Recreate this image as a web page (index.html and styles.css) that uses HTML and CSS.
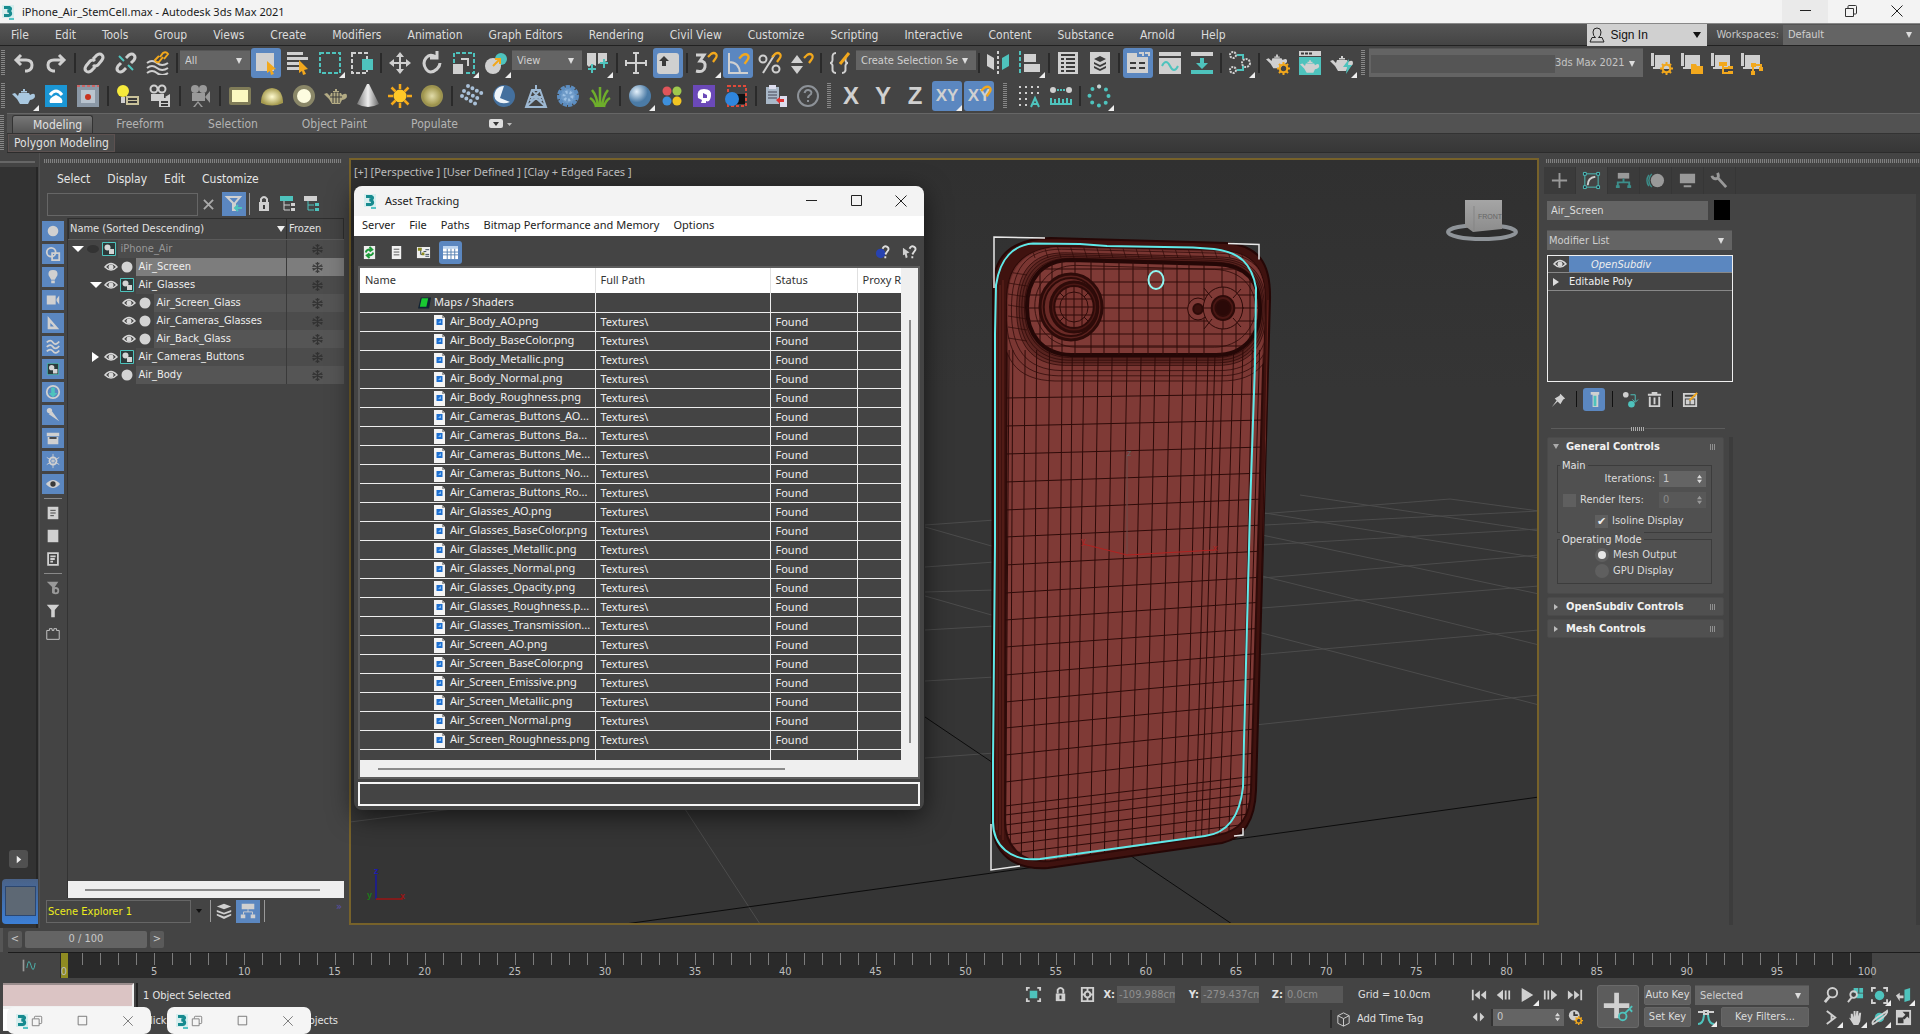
FILE: index.html
```html
<!DOCTYPE html>
<html lang="en">
<head>
<meta charset="utf-8">
<title>iPhone_Air_StemCell.max - Autodesk 3ds Max 2021</title>
<link rel="stylesheet" href="styles.css">
</head>
<body>
<svg class="sprite" aria-hidden="true">
  <defs>
    <radialGradient id="gSun"><stop offset="0" stop-color="#fffbd0"/><stop offset="1" stop-color="#a59a4e"/></radialGradient>
    <radialGradient id="gBlue" cx=".35" cy=".3"><stop offset="0" stop-color="#e4f1fb"/><stop offset="1" stop-color="#4b7ba6"/></radialGradient>
    <linearGradient id="gCone"><stop offset="0" stop-color="#777"/><stop offset=".5" stop-color="#eee"/><stop offset="1" stop-color="#666"/></linearGradient>
    <linearGradient id="gCube" x2="0" y2="1"><stop offset="0" stop-color="#a5a5a5"/><stop offset="1" stop-color="#8c8c8c"/></linearGradient>
  </defs>
  <symbol id="max" viewBox="0 0 16 16"><path fill="#d7eeee" d="M2 1h12v13H2z"/><path fill="none" stroke="#178b8f" stroke-width="3" d="M4 3.500h5.500c2 1 1 3-2 3.500 4 .5 4 4 1 4.500H4"/><path fill="#56c5c5" d="M9 14h5v2H9z"/></symbol>
  <symbol id="eye" viewBox="0 0 14 12"><path fill="none" stroke="#d8d8d8" stroke-width="1.500" d="M1 6q6-7 12 0-6 6-12 0z"/><circle cx="7" cy="6" r="2.500" fill="#d8d8d8"/></symbol>
  <symbol id="obj" viewBox="0 0 14 14"><circle cx="7" cy="7" r="5.500" fill="#d4d4d4"/></symbol>
  <symbol id="grp" viewBox="0 0 14 14"><path fill="#2c3a3a" stroke="#4ec3bd" d="M.5.500h13v13H.500z"/><circle cx="5.500" cy="5.500" r="3" fill="#d4d4d4"/><path fill="#d4d4d4" d="M7 7h5v5H7z"/></symbol>
  <symbol id="snow" viewBox="0 0 14 14"><path fill="none" stroke="#2b2b2b" stroke-width="1.200" d="M7 1v12M2 4l10 6M12 4L2 10M5 2l2 2 2-2M5 12l2-2 2 2M1.500 6L4 5.500M12.500 6L10 5.500M1.500 8L4 8.500M12.500 8L10 8.500"/></symbol>
  <symbol id="png" viewBox="0 0 11 15"><path fill="#f4f4f4" d="M0 0h8l3 3v12H0z"/><path fill="#9a9a9a" d="M8 0l3 3H8z"/><path fill="#1d6fd0" d="M2.500 4h6v6h-6z"/><path fill="#7fb8ef" d="M4 8l3-3v3z"/></symbol>
  <symbol id="hook" viewBox="0 0 12 12"><path fill="none" stroke="#f2a81d" stroke-width="2.200" d="M2 6l3-3q3-2 5 0 1.500 2-.5 4.500L7 11"/></symbol>
  <symbol id="pot" viewBox="0 0 24 20"><path d="M7 7h10l1 2q5-3 5 1 0 3-5 4l-2 4H8l-3-5-5-5 3-1 3 3zM9 5h6v1.500H9zM11 3h2v2h-2z"/></symbol>
  <symbol id="gear" viewBox="0 0 12 12"><circle cx="6" cy="6" r="3.500" fill="none" stroke="#f2a81d" stroke-width="2"/><path stroke="#f2a81d" stroke-width="1.800" d="M6 0v2.500M6 9.500V12M0 6h2.500M9.500 6H12M1.800 1.800l1.700 1.700M8.500 8.500l1.700 1.700M10.200 1.800L8.500 3.500M3.500 8.500l-1.700 1.700"/></symbol>
  <symbol id="min" viewBox="0 0 14 14"><path stroke="#222" d="M2 6.500h11"/></symbol>
  <symbol id="box" viewBox="0 0 14 14"><path fill="none" stroke="#222" d="M2.500 1.500h10v10h-10z"/></symbol>
  <symbol id="rest" viewBox="0 0 14 14"><path fill="none" stroke="#333" d="M1.500 4.500h8v8h-8zM4 4V2.500q0-1 1-1h6.500q1 0 1 1v6.500q0 1-1 1h-2"/></symbol>
  <symbol id="cls" viewBox="0 0 14 14"><path stroke="#222" d="M1.500 1.500l11 11M12.500 1.500l-11 11"/></symbol>
  <symbol id="ud" viewBox="0 0 8 12"><path fill="#d8d8d8" d="M4 1l3 4H1zM4 11l3-4H1z"/></symbol>
</svg>

<header class="titlebar">
  <svg class="i16"><use href="#max"/></svg>
  <h1>iPhone_Air_StemCell.max - Autodesk 3ds Max 2021</h1>
  <div class="winbtns">
    <button class="hot" aria-label="Minimize"><svg class="i14"><use href="#min"/></svg></button>
    <button aria-label="Restore"><svg class="i14"><use href="#rest"/></svg></button>
    <button aria-label="Close"><svg class="i14"><use href="#cls"/></svg></button>
  </div>
</header>

<nav class="menubar">
  <div class="menus">
    <a href="#">File</a><a href="#">Edit</a><a href="#">Tools</a><a href="#">Group</a><a href="#">Views</a><a href="#">Create</a><a href="#">Modifiers</a><a href="#">Animation</a><a href="#">Graph Editors</a><a href="#">Rendering</a><a href="#">Civil View</a><a href="#">Customize</a><a href="#">Scripting</a><a href="#">Interactive</a><a href="#">Content</a><a href="#">Substance</a><a href="#">Arnold</a><a href="#">Help</a>
  </div>
  <button class="signin"><svg class="i16" viewBox="0 0 16 16"><path fill="none" stroke="#222" d="M8 1q4 0 4 4t-2.500 5.500H13L15 15H1l2-4.500h3.500Q4 9 4 5t4-4z"/></svg><span>Sign In</span><span class="tri dark"></span></button>
  <label for="ws">Workspaces:</label>
  <span class="sel ws"><select id="ws"><option>Default</option></select></span>
</nav>

<div class="toolbar">
  <i class="grip"></i>
  <button aria-label="Undo"><svg viewBox="0 0 24 24"><path class="gs w3" d="M9 4L4 9l5 5M4 9h10q6 0 6 5t-5 6h-2"/></svg></button>
  <button aria-label="Redo"><svg viewBox="0 0 24 24"><path class="gs w3" d="M15 4l5 5-5 5M20 9H10q-6 0-6 5t5 6h2"/></svg></button>
  <i class="sep"></i>
  <button aria-label="Link"><svg viewBox="0 0 24 24"><path class="gs w3" d="M11 8l4-4q3-2 5 0t0 5l-4 5q-3 2-5 0M13 16l-4 4q-3 2-5 0t0-5l4-5q3-2 5 0"/></svg></button>
  <button aria-label="Unlink"><svg viewBox="0 0 24 24"><path class="gs w3" d="M12 7l3-3q3-2 5 0t0 5l-3 3M12 17l-3 3q-3 2-5 0t0-5l3-3"/><path class="ts" d="M5 5l5 5M14 14l5 5"/></svg></button>
  <button aria-label="Bind to Space Warp"><svg viewBox="0 0 24 24"><path class="gs" d="M1 12q5-4 10 0t11 0M1 17q5-4 10 0t11 0M1 22q5-4 10 0t11 0"/><path class="ys" d="M14 6l3-4q3-2 5 1l-4 5M17 6l-4 5q-3 1-4-2l4-4"/></svg></button>
  <i class="sep"></i>
  <span class="sel fl"><select aria-label="Selection filter"><option>All</option></select></span>
  <button class="on" aria-label="Select Object"><svg viewBox="0 0 24 24"><path class="g" d="M2 2h18v18H2z"/><path class="y" d="M13 10l9 8-4 1 2 4-3 1-1-4-3 2z"/></svg></button>
  <button aria-label="Select by Name"><svg viewBox="0 0 24 24"><path class="g" d="M1 1h16v3H1zM1 6h21v3H1zM1 11h12v3H1zM1 16h12v3H1z"/><path class="y" d="M13 9l9 9-4 1 2 4-3 1-1-4-3 2z"/></svg></button>
  <button class="fly" aria-label="Rectangular Selection Region"><svg viewBox="0 0 24 24"><path class="ts" stroke-dasharray="4 2" d="M2 2h20v20H2z"/></svg></button>
  <button aria-label="Window or Crossing"><svg viewBox="0 0 24 24"><path class="gs" stroke-dasharray="4 2" d="M2 2h15v20H2z"/><path class="t" d="M12 8h11v11H12z"/></svg></button>
  <i class="sep"></i>
  <button aria-label="Move"><svg viewBox="0 0 24 24"><path class="g" d="M12 1l4 5h-3v5h5V8l5 4-5 4v-3h-5v5h3l-4 5-4-5h3v-5H6v3l-5-4 5-4v3h5V6H8z"/></svg></button>
  <button aria-label="Rotate"><svg viewBox="0 0 24 24"><path class="gs w3" d="M16 6q-6-4-10 1t0 11 11 0q3-3 3-6M17 0v7h-7"/></svg></button>
  <button class="fly" aria-label="Scale"><svg viewBox="0 0 24 24"><path class="ts" stroke-dasharray="4 2" d="M2 12V2h20v20H12"/><path class="g" d="M1 13h10v10H1z"/><path class="gs" d="M9 8h7v7"/></svg></button>
  <button class="fly" aria-label="Place"><svg viewBox="0 0 24 24"><circle class="t" cx="17" cy="8" r="6"/><circle class="g" cx="9" cy="15" r="8"/><path class="ys" d="M9 15l6-6M11 8h5v5"/></svg></button>
  <span class="sel fl"><select aria-label="Reference coordinate system"><option>View</option></select></span>
  <button class="fly" aria-label="Use Pivot Point Center"><svg viewBox="0 0 24 24"><path class="g" d="M1 2h9v13l-4-2-3 3-2-2zM12 2h9v8l-9 3z"/><path class="ts" d="M6 13v9M2 18h8M18 8v9M14 12h8"/></svg></button>
  <i class="sep"></i>
  <button aria-label="Select and Manipulate"><svg viewBox="0 0 24 24"><path class="gs" d="M12 2v20M2 12h20M9 2h6M9 22h6M2 9v6M22 9v6"/></svg></button>
  <button class="on" aria-label="Keyboard Shortcut Override"><svg viewBox="0 0 24 24"><rect class="g" x="1" y="2" width="22" height="21" rx="3"/><path class="k" d="M8 5l5 5h-3v5H6v-5H3z"/></svg></button>
  <i class="sep"></i>
  <button class="fly" aria-label="Snaps Toggle"><svg viewBox="0 0 24 24"><path class="gs w3" d="M2 4h8l-4 6q6 0 5 6t-9 4"/><use href="#hook" x="12" y="0" width="12" height="12"/></svg></button>
  <button class="on" aria-label="Angle Snap"><svg viewBox="0 0 24 24"><path class="gs" d="M3 2v20h19M3 11q10 0 11 11"/><use href="#hook" x="11" y="1" width="13" height="13"/></svg></button>
  <button aria-label="Percent Snap"><svg viewBox="0 0 24 24"><circle class="gs" cx="5" cy="8" r="3.500"/><circle class="gs" cx="18" cy="18" r="3.500"/><path class="gs" d="M17 3L5 22"/><use href="#hook" x="12" y="0" width="12" height="12"/></svg></button>
  <button aria-label="Spinner Snap"><svg viewBox="0 0 24 24"><path class="g" d="M7 4l6 8H1zM7 23l6-8H1z"/><use href="#hook" x="12" y="1" width="12" height="12"/></svg></button>
  <i class="sep"></i>
  <button aria-label="Edit Named Selection Sets"><svg viewBox="0 0 24 24"><path class="gs" d="M8 2Q4 2 4.500 7T2 12q3 0 2.500 5T8 22M14 22q4 0 3.500-5t2.500-5q-3 0-2.500-5"/><path class="ys w3" d="M12 13l9-11"/></svg></button>
  <span class="sel named"><select aria-label="Named selection sets"><option>Create Selection Se</option></select></span>
  <i class="sep"></i>
  <button aria-label="Mirror"><svg viewBox="0 0 24 24"><path class="g" d="M1 3l7 4v12l-7-4z"/><path class="t" d="M23 3l-7 4v12l7-4z"/><path class="gs" stroke-dasharray="3 2" d="M12 0v24"/></svg></button>
  <button class="fly" aria-label="Align"><svg viewBox="0 0 24 24"><path class="ts" stroke-dasharray="4 2" d="M2 0v24"/><path class="g" d="M6 3h12v8H6zM6 13h16v8H6z"/></svg></button>
  <i class="sep"></i>
  <button aria-label="Layer Explorer"><svg viewBox="0 0 24 24"><path class="g" d="M2 1h20v22H2z"/><path class="ks" d="M5 4h14M5 8h3M10 8h9M5 12h3M10 12h9M5 16h3M10 16h9M5 20h3M10 20h9"/></svg></button>
  <button aria-label="Toggle Scene Explorer"><svg viewBox="0 0 24 24"><path class="g" d="M2 1h20v22H2z"/><path class="k" d="M12 5l6 3-6 3-6-3zM6 11l6 3 6-3v2l-6 3-6-3zM6 15l6 3 6-3v2l-6 3-6-3z"/></svg></button>
  <i class="sep"></i>
  <button class="on" aria-label="Toggle Ribbon"><svg viewBox="0 0 24 24"><path class="g" d="M1 2h10v4h11v16H1z"/><path class="gs" d="M13 2h4v3M19 2h4v3"/><path class="ks" d="M4 12h6M13 12h6M4 17h6M13 17h6"/></svg></button>
  <button aria-label="Curve Editor"><svg viewBox="0 0 24 24"><path class="g" d="M1 1h22v4H1zM1 7h22v16H1z"/><path class="ts" d="M4 15q4-8 8 0t8 0"/></svg></button>
  <button aria-label="Dope Sheet"><svg viewBox="0 0 24 24"><path class="g" d="M1 1h22v4H1z"/><path class="t" d="M1 19h22v4H1zM10 7h4v5h4l-6 6-6-6h4z"/></svg></button>
  <i class="sep"></i>
  <button class="fly" aria-label="Material Editor"><svg viewBox="0 0 24 24"><g class="gs" stroke-dasharray="2 1"><circle cx="5" cy="4" r="3"/><circle cx="5" cy="19" r="3"/><circle cx="18" cy="12" r="4"/></g><path class="ts" d="M9 4h6v4M9 19h6v-4"/></svg></button>
  <i class="sep"></i>
  <button aria-label="Render Setup"><svg viewBox="0 0 24 24"><use class="g" href="#pot" width="22" height="20"/><use href="#gear" x="11" y="11" width="13" height="13"/></svg></button>
  <button aria-label="Rendered Frame Window"><svg viewBox="0 0 24 24"><path class="g" d="M1 0h22v5H1z"/><path class="ks" d="M3 2.500h3M7 2.500h3M11 2.500h3"/><path class="t" d="M1 6h22v18H1z"/><use class="g" href="#pot" x="2" y="6" width="20" height="18"/></svg></button>
  <button class="fly" aria-label="Render Production"><svg viewBox="0 0 24 24"><use class="g" href="#pot" y="2" width="24" height="20"/><path class="t" d="M19 8l-6 8h4l-1 7 6-9h-4z"/></svg></button>
  <i class="grip wide"></i>
  <span class="sel proj"><select aria-label="Project folder"><option>3ds Max 2021</option></select></span>
  <button class="nr" aria-label="Project settings"><svg viewBox="0 0 24 24"><path class="g" d="M2 2h3v13H2zM6 4h15v14H4v-2h2z"/><use href="#gear" x="11" y="11" width="13" height="13"/></svg></button>
  <button class="nr" aria-label="Project files"><svg viewBox="0 0 24 24"><path class="g" d="M2 2h3v13H2zM6 4h15v14H4v-2h2z"/><path class="y" d="M12 13h5l1 2h6v8H12z"/></svg></button>
  <button class="nr" aria-label="Project tree"><svg viewBox="0 0 24 24"><path class="g" d="M2 2h3v13H2zM6 4h15v14H4v-2h2z"/><path class="y" d="M10 11h8v4h-8zM19 15h5v3h-5zM19 20h5v3h-5z"/><path class="ys" d="M14 14v8h5M14 17h5"/></svg></button>
  <button class="nr" aria-label="Project links"><svg viewBox="0 0 24 24"><path class="g" d="M2 2h3v13H2zM6 4h15v14H4v-2h2z"/><path class="y" d="M12 12h5v4h-5zM20 16h4v4h-4zM12 20h4v4h-4z"/><path class="ys" d="M14 15v5M16 14h6v3"/></svg></button>
</div>

<div class="toolbar second">
  <i class="grip"></i>
  <button class="fly" aria-label="Teapot"><svg viewBox="0 0 24 24"><use href="#pot" y="2" width="24" height="20" fill="#a9c8e0"/></svg></button>
  <button aria-label="Asset library"><svg viewBox="0 0 24 24"><path fill="#1a96d5" d="M1 1h22v22H1z"/><path fill="none" stroke="#fff" stroke-width="3" d="M6 11q6-8 12 0"/><path fill="#fff" d="M12 11q8 3 6 8H6q-2-5 6-8z"/></svg></button>
  <button aria-label="Render view"><svg viewBox="0 0 24 24"><path fill="#8b98a6" d="M1 1h22v22H1z"/><path fill="#b9c4cf" d="M5 6h14v13H5z"/><circle cx="12" cy="13" r="3" fill="#c8321e"/><path stroke="#c66" stroke-width="2" stroke-dasharray="3 2" d="M1 2h22"/></svg></button>
  <i class="sep w"></i>
  <button aria-label="Light lister"><svg viewBox="0 0 24 24"><circle cx="7" cy="7" r="6" fill="#f6ea3c"/><path class="g" d="M5 13h4v6H5z"/><path fill="#c9c29a" d="M10 12h13v9H10z"/><path class="ks" d="M12 15h9M12 18h9"/></svg></button>
  <button aria-label="Camera lister"><svg viewBox="0 0 24 24"><circle class="gs" cx="6" cy="5" r="3.500"/><circle class="gs" cx="14" cy="5" r="3.500"/><path class="g" d="M3 10h13v7H3zM17 13l5-3v7zM11 14h11v9H11z"/><path class="ks" d="M13 18h7M13 21h7"/></svg></button>
  <i class="sep w"></i>
  <button aria-label="Camera"><svg viewBox="0 0 24 24"><g fill="#999"><circle cx="7" cy="5" r="4"/><circle cx="15" cy="5" r="4"/><path d="M4 9h13v8H4zM17 13l5-6v12zM10 17l5 6h-2l-3-4-3 4H5z"/></g></svg></button>
  <i class="sep w"></i>
  <button aria-label="Plane light"><svg viewBox="0 0 24 24"><rect x="1" y="3" width="22" height="18" rx="2" fill="#807c58"/><path fill="#fbf8c0" d="M4 6h16v12H4z"/></svg></button>
  <button aria-label="Dome light"><svg viewBox="0 0 24 24"><path fill="url(#gSun)" d="M1 19q0-14 11-15 11 1 11 15-11 5-22 0z"/></svg></button>
  <button aria-label="Sphere light"><svg viewBox="0 0 24 24"><circle cx="12" cy="12" r="11" fill="#8a8768"/><circle cx="12" cy="12" r="7" fill="#fdfce0"/></svg></button>
  <button aria-label="Mesh light"><svg viewBox="0 0 24 24"><use href="#pot" y="2" width="24" height="20" fill="#b3ab84"/><path class="ks th" d="M9 8v11M12 8v11M15 8v11M6 13h12"/></svg></button>
  <button aria-label="IES light"><svg viewBox="0 0 24 24"><path fill="url(#gCone)" d="M11 0h2l10 20q-11 6-22 0z"/></svg></button>
  <button aria-label="Sun light"><svg viewBox="0 0 24 24"><circle cx="12" cy="12" r="6.500" fill="#ffc928"/><path stroke="#f5a91a" stroke-width="2.500" d="M12 0v5M12 19v5M0 12h5M19 12h5M3.500 3.500l4 4M16.500 16.500l4 4M20.500 3.500l-4 4M7.500 16.500l-4 4"/></svg></button>
  <button aria-label="Ambient light"><svg viewBox="0 0 24 24"><circle cx="12" cy="12" r="11" fill="#9c9350"/><circle cx="12" cy="12" r="9" fill="url(#gSun)" opacity=".7"/></svg></button>
  <i class="sep w"></i>
  <button aria-label="Instancer"><svg viewBox="0 0 24 24"><g fill="none" stroke="#a9c0d8" stroke-width="4" stroke-linecap="round" stroke-dasharray="0 5"><path d="M8 2l15 8M4 7l15 8M2 12l14 8"/></g></svg></button>
  <button aria-label="Clipper"><svg viewBox="0 0 24 24"><circle cx="12" cy="12" r="11" fill="#44709e"/><path fill="#eef4fa" d="M12 2L8 14l10 4Q10 21 5 17T4 6q3-4 8-4z"/></svg></button>
  <button aria-label="Proxy"><svg viewBox="0 0 24 24"><path fill="none" stroke="#9db8d2" stroke-width="2" d="M12 1v5M8 6h8l6 17H2zM8 6l10 11M16 6L6 17M6 13h12M2 23l10-9 10 9"/></svg></button>
  <button aria-label="Fur"><svg viewBox="0 0 24 24"><circle cx="12" cy="12" r="9" fill="#6f9bc8"/><circle cx="12" cy="12" r="9" fill="none" stroke="#5c8dc0" stroke-width="4" stroke-dasharray="4 1"/><circle cx="12" cy="12" r="4" fill="none" stroke="#9cc0e4" stroke-width="3" stroke-dasharray="2 2"/></svg></button>
  <button aria-label="Grass"><svg viewBox="0 0 24 24"><path fill="none" stroke="#6eae2b" stroke-width="2.500" d="M12 23V3M10 23Q9 12 4 6M14 23q1-11 6-17M8 23q-1-6-6-9M16 23q1-6 6-9"/></svg></button>
  <i class="sep w"></i>
  <button class="fly" aria-label="Sphere"><svg viewBox="0 0 24 24"><circle cx="12" cy="12" r="11" fill="url(#gBlue)"/></svg></button>
  <button aria-label="Material library"><svg viewBox="0 0 24 24"><circle cx="7" cy="7" r="4.500" fill="#e0555a"/><circle cx="17" cy="7" r="4.500" fill="#9fc84d"/><circle cx="7" cy="17" r="4.500" fill="#3e90dc"/><circle cx="17" cy="17" r="4.500" fill="#f2c522"/></svg></button>
  <button aria-label="Denoiser"><svg viewBox="0 0 24 24"><path fill="#6b49b8" d="M1 1h22v22H1z"/><path fill="#fff" d="M6 14q-2-9 6-9t7 7-5 5v2H9l1-3zM11 9v5h4v-3z" fill-rule="evenodd"/></svg></button>
  <button aria-label="Region"><svg viewBox="0 0 24 24"><path fill="none" stroke="#e04a3a" stroke-width="2" stroke-dasharray="3 2" d="M4 2h18v20H4z"/><path fill="#111" d="M13 10h8v10h-8z"/><circle cx="8" cy="15" r="7" fill="#2f86dd"/></svg></button>
  <i class="sep w"></i>
  <button aria-label="Transfer"><svg viewBox="0 0 24 24"><path fill="#a9b8c8" d="M2 3h13v17H2z"/><path fill="#dde" d="M5 1h7v4H5zM16 12h7v11h-7z"/><path stroke="#445" d="M4 8h9M4 11h9M4 14h9"/><path fill="#d33" d="M12 16l4-3v2h4v3h-4v2z"/></svg></button>
  <button aria-label="Help"><svg viewBox="0 0 24 24"><circle cx="12" cy="12" r="10" fill="none" stroke="#8d9298" stroke-width="2"/><path fill="none" stroke="#8d9298" stroke-width="2" d="M8.500 9q1-3.500 4-3 4 1 2.500 4-3 2-3 4M12 16v2"/></svg></button>
  <i class="grip wide"></i>
  <button class="axis">X</button><button class="axis">Y</button><button class="axis">Z</button>
  <button class="axis on fly s">XY</button><button class="axis on s">XY<svg class="hk"><use href="#hook"/></svg></button>
  <i class="grip gap"></i>
  <button aria-label="Snap to grid"><svg viewBox="0 0 24 24"><path class="gs" stroke-dasharray="2 4" d="M2 3h22M2 9h22M2 15h10M2 21h10"/><path class="ts" d="M14 23l4-9 4 9M15 20h6"/></svg></button>
  <button aria-label="Measure"><svg viewBox="0 0 24 24"><circle class="g" cx="4" cy="6" r="3"/><circle class="g" cx="20" cy="6" r="3"/><path class="ts" stroke-dasharray="2 1" d="M8 6h8"/><path class="ts" d="M2 14v6M6 15v5M10 14v6M14 15v5M18 14v6M22 15v5M1 20h22"/></svg></button>
  <i class="sep"></i>
  <button class="fly" aria-label="Array"><svg viewBox="0 0 24 24"><circle cx="12" cy="12" r="9.500" fill="none" stroke="#4ec3bd" stroke-width="4" stroke-linecap="round" stroke-dasharray="0 7.460"/><circle class="g" cx="12" cy="2.500" r="2"/></svg></button>
</div>

<section class="ribbon">
  <i class="grip"></i>
  <div class="ribmain">
    <div class="tabs"><button class="cur">Modeling</button><button>Freeform</button><button>Selection</button><button>Object Paint</button><button>Populate</button><button class="mini" aria-label="Ribbon display"><svg viewBox="0 0 24 10"><rect width="14" height="9" rx="2" fill="#ddd"/><path fill="#333" d="M4 3h6L7 7z"/><path fill="#bbb" d="M18 4h5l-2.500 3z"/></svg></button></div>
    <div class="panels"><button>Polygon Modeling</button></div>
  </div>
</section>

<main class="main">
  <aside class="strip">
    <i class="hgrip"></i>
    <div class="well">
      <button class="play" aria-label="Expand layout tabs"><svg viewBox="0 0 8 10"><path fill="#eee" d="M1 0l6 5-6 5z"/></svg></button>
      <button class="layout" aria-label="Viewport layout"><span></span></button>
    </div>
  </aside>

  <aside class="explorer">
    <i class="hgrip"></i>
    <nav class="exmenu"><a href="#">Select</a><a href="#">Display</a><a href="#">Edit</a><a href="#">Customize</a></nav>
    <div class="find">
      <input type="text" aria-label="Find">
      <button class="x" aria-label="Clear"><svg viewBox="0 0 12 12"><path stroke="#aaa" stroke-width="2" d="M1 1l10 10M11 1L1 11"/></svg></button>
      <button class="on" aria-label="Filter"><svg viewBox="0 0 20 20"><path class="gs" d="M3 3h13l-5 6v7H9V9z"/><path class="ts" d="M18 14h-7M14 11l-3 3 3 3"/></svg></button>
      <i class="vbar"></i>
      <button aria-label="Lock"><svg viewBox="0 0 20 20"><path class="gs" d="M7 8V5q3-4 6 0v3"/><path class="g" d="M5 8h10v9H5z"/><path class="k" d="M9 11h2v4H9z"/></svg></button>
      <button aria-label="Hierarchy"><svg viewBox="0 0 20 20"><path class="t" d="M2 2h13v5H2z"/><path class="gs th" d="M6 7v9h6M6 11h6"/><path class="g" d="M13 9h4v3h-4zM13 14h4v3h-4z"/></svg></button>
      <button aria-label="Layers"><svg viewBox="0 0 20 20"><path class="g" d="M2 2h13v5H2z"/><path class="ts th" d="M6 7v9h6M6 11h6"/><path class="t" d="M13 9h4v3h-4zM13 14h4v3h-4z"/></svg></button>
    </div>
    <div class="exbody">
      <div class="filters">
        <button class="on" aria-label="Geometry"><svg viewBox="0 0 18 18"><circle class="g" cx="9" cy="9" r="6"/></svg></button>
        <button class="on" aria-label="Shapes"><svg viewBox="0 0 18 18"><path class="gs" d="M8 8h8v8H8z"/><circle class="gs" cx="7" cy="7" r="5"/></svg></button>
        <button class="on" aria-label="Lights"><svg viewBox="0 0 18 18"><path class="g" d="M9 1q6 0 5 6l-3 5H7L4 7Q3 1 9 1zM7 13h4v3H7z"/></svg></button>
        <button class="on" aria-label="Cameras"><svg viewBox="0 0 18 18"><path class="g" d="M2 4h10v10H2zM13 8l3-4v10l-3-4z"/></svg></button>
        <button class="on" aria-label="Helpers"><svg viewBox="0 0 18 18"><path class="g" fill-rule="evenodd" d="M3 1l13 15H3zM6 9v4h4z"/></svg></button>
        <button class="on" aria-label="Space Warps"><svg viewBox="0 0 18 18"><path class="gs" d="M2 5q4-4 7 0t7-1M2 10q4-4 7 0t7-1M2 15q4-4 7 0t7-1"/></svg></button>
        <button class="on" aria-label="Groups"><svg viewBox="0 0 18 18"><use href="#grp" x="2" y="2" width="14" height="14"/></svg></button>
        <button class="on" aria-label="XRefs"><svg viewBox="0 0 18 18"><circle class="gs" cx="9" cy="9" r="7"/><path class="t" d="M7 4h4v6h3l-5 5-5-5h3z"/></svg></button>
        <button class="on" aria-label="Bones"><svg viewBox="0 0 18 18"><circle class="g" cx="5" cy="4" r="3"/><path class="g" d="M4 8l4-3 8 11z"/></svg></button>
        <button class="on" aria-label="Containers"><svg viewBox="0 0 18 18"><path class="g" d="M2 3h14v4H2zM3 8h12v8H3z"/><path class="ks" d="M5 9h8"/></svg></button>
        <button class="on" aria-label="Frozen"><svg viewBox="0 0 18 18"><circle class="gs" cx="9" cy="9" r="4"/><path class="gs th" d="M9 1v16M2 5l14 8M16 5L2 13"/></svg></button>
        <button class="on" aria-label="Hidden"><svg viewBox="0 0 18 18"><path class="g" d="M1 9q8-9 16 0-8 9-16 0z"/><circle class="k" cx="9" cy="9" r="3"/></svg></button>
        <hr>
        <button aria-label="All"><svg viewBox="0 0 18 18"><path class="g" d="M3 2h12v14H3z"/><path class="ks th" d="M6 6h6M6 9h6M6 12h4"/></svg></button>
        <button aria-label="None"><svg viewBox="0 0 18 18"><path class="g" d="M3 2h12v14H3z"/></svg></button>
        <button aria-label="Invert"><svg viewBox="0 0 18 18"><path class="gs" d="M3.500 2.500h11v13h-11zM6 6h6M6 9h5M6 12h3"/></svg></button>
        <hr>
        <button aria-label="Filter settings"><svg viewBox="0 0 18 18"><path fill="#999" d="M2 2h13l-4 6v7H8V8z"/><circle cx="12" cy="12" r="3" fill="none" stroke="#999" stroke-width="2"/></svg></button>
        <button aria-label="Filters"><svg viewBox="0 0 18 18"><path class="g" d="M2 2h14l-5 6v8H7V8z"/></svg></button>
        <button aria-label="Container view"><svg viewBox="0 0 18 18"><path class="gs th" d="M2 5h3V3h3v2h2V3h3v2h3v10H2z"/></svg></button>
      </div>
      <div class="treewrap">
        <table class="tree">
          <thead><tr><th>Name (Sorted Descending)<span class="tri"></span></th><th class="fz">Frozen</th></tr></thead>
          <tbody>
            <tr><td><div class="n l0"><span class="tw open"></span><svg class="e dim" viewBox="0 0 14 12"><ellipse cx="7" cy="6" rx="6" ry="4" fill="#333"/></svg><svg class="o"><use href="#grp"/></svg><span class="nm off">iPhone_Air</span></div></td><td class="fz"><svg class="s"><use href="#snow"/></svg></td></tr>
            <tr class="sel-row"><td><div class="n l1"><span class="tw"></span><svg class="e"><use href="#eye"/></svg><svg class="o"><use href="#obj"/></svg><span class="nm">Air_Screen</span></div></td><td class="fz"><svg class="s"><use href="#snow"/></svg></td></tr>
            <tr><td><div class="n l1"><span class="tw open"></span><svg class="e"><use href="#eye"/></svg><svg class="o"><use href="#grp"/></svg><span class="nm">Air_Glasses</span></div></td><td class="fz"><svg class="s"><use href="#snow"/></svg></td></tr>
            <tr><td><div class="n l2"><span class="tw"></span><svg class="e"><use href="#eye"/></svg><svg class="o"><use href="#obj"/></svg><span class="nm">Air_Screen_Glass</span></div></td><td class="fz"><svg class="s"><use href="#snow"/></svg></td></tr>
            <tr><td><div class="n l2"><span class="tw"></span><svg class="e"><use href="#eye"/></svg><svg class="o"><use href="#obj"/></svg><span class="nm">Air_Cameras_Glasses</span></div></td><td class="fz"><svg class="s"><use href="#snow"/></svg></td></tr>
            <tr><td><div class="n l2"><span class="tw"></span><svg class="e"><use href="#eye"/></svg><svg class="o"><use href="#obj"/></svg><span class="nm">Air_Back_Glass</span></div></td><td class="fz"><svg class="s"><use href="#snow"/></svg></td></tr>
            <tr><td><div class="n l1"><span class="tw shut"></span><svg class="e"><use href="#eye"/></svg><svg class="o"><use href="#grp"/></svg><span class="nm">Air_Cameras_Buttons</span></div></td><td class="fz"><svg class="s"><use href="#snow"/></svg></td></tr>
            <tr><td><div class="n l1"><span class="tw"></span><svg class="e"><use href="#eye"/></svg><svg class="o"><use href="#obj"/></svg><span class="nm">Air_Body</span></div></td><td class="fz"><svg class="s"><use href="#snow"/></svg></td></tr>
          </tbody>
        </table>
        <div class="hscroll"><i></i></div>
      </div>
    </div>
    <div class="exfoot">
      <input type="text" aria-label="Explorer name" value="Scene Explorer 1">
      <span class="tri dark"></span><i class="vbar"></i>
      <button aria-label="Layer mode"><svg viewBox="0 0 20 20"><path class="g" d="M10 2l8 3-8 3-8-3zM2 9l8 3 8-3v2l-8 3-8-3zM2 13l8 3 8-3v2l-8 4-8-4z"/></svg></button>
      <button class="on" aria-label="Hierarchy mode"><svg viewBox="0 0 20 20"><path class="g" d="M3 2h14v6H3zM2 14h5v4H2zM13 14h5v4h-5z"/><path class="gs th" d="M5 14v-3h10v3M10 8v3"/></svg></button>
      <i class="vbar"></i><span class="more">»</span>
    </div>
  </aside>

  <section class="viewport">
    <svg class="scene" viewBox="351 160 1186 763" preserveAspectRatio="xMidYMid slice" aria-hidden="true">
      <g id="floor" fill="none" stroke="#4c4c4c"></g>
      <path fill="none" stroke="#0c0c0c" d="M625 924L1539 797M925 717L1232 924"/>
      <g id="phone"></g>
      <path fill="none" stroke="#e8e8e8" stroke-width="1.500" d="M994 288v-51l51 1M1228 243.500l31 1v15M991 824v46l29-4M1243 828v7l-9 1"/>
      <path fill="none" stroke="#6b4c4a" d="M1127 455v100"/>
      <path fill="none" stroke="#b3201f" d="M1083 544l44 11 88-5"/>
      <g class="ax"><text x="1127" y="456" fill="#636363">z</text><text x="1081" y="544" fill="#b3201f">y</text><text x="1213" y="551" fill="#b3201f">x</text></g>
      <g>
        <ellipse cx="1482" cy="232" rx="34" ry="7" fill="#2c2c2c" stroke="#8f9499" stroke-width="4"/>
        <path fill="url(#gCube)" d="M1465 200h37v29l-29 3-8-6z"/>
        <path fill="none" stroke="#858585" d="M1474 206v25"/>
        <text x="1478" y="219" font-size="7" fill="#666" font-family="Liberation Sans">FRONT</text>
      </g>
      <path fill="none" stroke="#1818a0" stroke-width="1.500" d="M376 875v24"/><path fill="none" stroke="#9a1414" stroke-width="1.500" d="M376 899h27"/>
      <g class="ax b"><text x="374" y="874" fill="#1c1cb0">z</text><text x="367" y="898" fill="#1b7a1b">y</text><text x="400" y="899" fill="#9a1414">x</text></g>
    </svg>
    <div class="vplabel"><span>[+]</span><span>[Perspective ]</span><span>[User Defined ]</span><span>[Clay + Edged Faces ]</span></div>

    <div class="win">
      <div class="wtitle"><svg class="i16"><use href="#max"/></svg><h2>Asset Tracking</h2>
        <button aria-label="Minimize"><svg class="i14"><use href="#min"/></svg></button><button aria-label="Maximize"><svg class="i14"><use href="#box"/></svg></button><button aria-label="Close"><svg class="i14"><use href="#cls"/></svg></button></div>
      <nav class="wmenu"><a href="#">Server</a><a href="#">File</a><a href="#">Paths</a><a href="#">Bitmap Performance and Memory</a><a href="#">Options</a></nav>
      <div class="wtools">
        <button aria-label="Refresh"><svg viewBox="0 0 16 16"><path fill="#eee" d="M2 1h12v14H2z"/><path fill="none" stroke="#1d9a3a" stroke-width="2" d="M4 8q1-4 6-3M12 8q-1 4-6 3M8 2l3 3-3 2M8 14l-3-3 3-2"/></svg></button>
        <button aria-label="Status log"><svg viewBox="0 0 16 16"><path fill="#f2f2f2" d="M3 1h10v14H3z"/><path stroke="#555" d="M5 4.500h6M5 7.500h6M5 10.500h6"/></svg></button>
        <button aria-label="Tree view"><svg viewBox="0 0 16 16"><path fill="#eee" d="M1 2h14v12H1z"/><path fill="none" stroke="#345" d="M3 4h3M8 7h3M10 10h4M5 4v6h3M10 5h4M10 12h4"/><path fill="#8a8a20" d="M2 3h4v3H2zM6 8h3v3H6z"/></svg></button>
        <button class="on" aria-label="Table view"><svg viewBox="0 0 16 16"><path fill="#fff" d="M0 1h16v14H0z"/><path fill="#bcd4ef" d="M0 1h16v3H0z"/><path stroke="#5580b0" d="M0 7.500h16M0 10.500h16M4.500 4v11M8.500 4v11M12.500 4v11"/></svg></button>
        <span class="grow"></span>
        <button aria-label="Help"><svg viewBox="0 0 16 16"><circle cx="6" cy="9" r="5" fill="#2742b0"/><path fill="none" stroke="#ddd" stroke-width="2" d="M8 4q2-4 5-2t0 5l-2 3M11 12v2"/></svg></button>
        <button aria-label="Context help"><svg viewBox="0 0 16 16"><path class="g" d="M1 3l7 5-3 1 1 4-2 1-1-4-2 1z"/><path fill="none" stroke="#ddd" stroke-width="2" d="M8 4q2-4 5-2t0 5l-2 3M11 12v2"/></svg></button>
      </div>
      <div class="frame">
        <div class="gridrow">
          <div class="tblwrap">
          <table class="assets">
            <colgroup><col class="c1"><col class="c2"><col class="c3"><col class="c4"></colgroup>
            <thead><tr><th>Name</th><th>Full Path</th><th>Status</th><th>Proxy R</th></tr></thead>
            <tbody>
              <tr><td class="grp"><svg viewBox="0 0 14 12"><path fill="#123" d="M3 0h11l-2 12H0z"/><path fill="#19c832" d="M4 1h7l-2 9H2z"/></svg>Maps / Shaders</td><td></td><td></td><td></td></tr>
              <tr><td><svg><use href="#png"/></svg>Air_Body_AO.png</td><td>Textures\</td><td>Found</td><td></td></tr>
              <tr><td><svg><use href="#png"/></svg>Air_Body_BaseColor.png</td><td>Textures\</td><td>Found</td><td></td></tr>
              <tr><td><svg><use href="#png"/></svg>Air_Body_Metallic.png</td><td>Textures\</td><td>Found</td><td></td></tr>
              <tr><td><svg><use href="#png"/></svg>Air_Body_Normal.png</td><td>Textures\</td><td>Found</td><td></td></tr>
              <tr><td><svg><use href="#png"/></svg>Air_Body_Roughness.png</td><td>Textures\</td><td>Found</td><td></td></tr>
              <tr><td><svg><use href="#png"/></svg>Air_Cameras_Buttons_AO...</td><td>Textures\</td><td>Found</td><td></td></tr>
              <tr><td><svg><use href="#png"/></svg>Air_Cameras_Buttons_Ba...</td><td>Textures\</td><td>Found</td><td></td></tr>
              <tr><td><svg><use href="#png"/></svg>Air_Cameras_Buttons_Me...</td><td>Textures\</td><td>Found</td><td></td></tr>
              <tr><td><svg><use href="#png"/></svg>Air_Cameras_Buttons_No...</td><td>Textures\</td><td>Found</td><td></td></tr>
              <tr><td><svg><use href="#png"/></svg>Air_Cameras_Buttons_Ro...</td><td>Textures\</td><td>Found</td><td></td></tr>
              <tr><td><svg><use href="#png"/></svg>Air_Glasses_AO.png</td><td>Textures\</td><td>Found</td><td></td></tr>
              <tr><td><svg><use href="#png"/></svg>Air_Glasses_BaseColor.png</td><td>Textures\</td><td>Found</td><td></td></tr>
              <tr><td><svg><use href="#png"/></svg>Air_Glasses_Metallic.png</td><td>Textures\</td><td>Found</td><td></td></tr>
              <tr><td><svg><use href="#png"/></svg>Air_Glasses_Normal.png</td><td>Textures\</td><td>Found</td><td></td></tr>
              <tr><td><svg><use href="#png"/></svg>Air_Glasses_Opacity.png</td><td>Textures\</td><td>Found</td><td></td></tr>
              <tr><td><svg><use href="#png"/></svg>Air_Glasses_Roughness.p...</td><td>Textures\</td><td>Found</td><td></td></tr>
              <tr><td><svg><use href="#png"/></svg>Air_Glasses_Transmission...</td><td>Textures\</td><td>Found</td><td></td></tr>
              <tr><td><svg><use href="#png"/></svg>Air_Screen_AO.png</td><td>Textures\</td><td>Found</td><td></td></tr>
              <tr><td><svg><use href="#png"/></svg>Air_Screen_BaseColor.png</td><td>Textures\</td><td>Found</td><td></td></tr>
              <tr><td><svg><use href="#png"/></svg>Air_Screen_Emissive.png</td><td>Textures\</td><td>Found</td><td></td></tr>
              <tr><td><svg><use href="#png"/></svg>Air_Screen_Metallic.png</td><td>Textures\</td><td>Found</td><td></td></tr>
              <tr><td><svg><use href="#png"/></svg>Air_Screen_Normal.png</td><td>Textures\</td><td>Found</td><td></td></tr>
              <tr><td><svg><use href="#png"/></svg>Air_Screen_Roughness.png</td><td>Textures\</td><td>Found</td><td></td></tr>
              <tr class="part"><td></td><td></td><td></td><td></td></tr>
            </tbody>
          </table>
          </div>
          <div class="vscroll"><i></i></div>
        </div>
        <div class="whs"><i></i></div>
      </div>
      <input class="wstatus" type="text" aria-label="Asset status" readonly>
    </div>
  </section>

  <aside class="cmd">
    <i class="hgrip"></i>
    <div class="ctabs">
      <button aria-label="Create"><svg viewBox="0 0 20 20"><path stroke="#999" stroke-width="2" d="M10 2v16M2 10h16"/></svg></button>
      <button class="cur" aria-label="Modify"><svg viewBox="0 0 20 20"><path class="ts th" d="M3 3h14v14H3z"/><path fill="#223" stroke="#4ec3bd" d="M1.500 1.500h3v3h-3zM15.500 1.500h3v3h-3zM1.500 15.500h3v3h-3zM15.500 15.500h3v3h-3z"/><path class="gs" d="M6 15Q6 7 14 6"/></svg></button>
      <button aria-label="Hierarchy"><svg viewBox="0 0 20 20"><path fill="#999" d="M4 2h12v6H4z"/><path fill="none" stroke="#3d8e8a" stroke-width="2" d="M4 16v-4h12v4M10 8v4"/><path fill="#3d8e8a" d="M2 15h4v3H2zM14 15h4v3h-4z"/></svg></button>
      <button aria-label="Motion"><svg viewBox="0 0 20 20"><circle cx="12" cy="10" r="7" fill="#999"/><path fill="none" stroke="#3d8e8a" stroke-width="1.500" d="M6 3q-6 7 0 14M3 4q-4 6 0 12"/></svg></button>
      <button aria-label="Display"><svg viewBox="0 0 20 20"><path fill="#999" d="M2 3h16v10H2zM6 15h8v2H6z"/></svg></button>
      <button aria-label="Utilities"><svg viewBox="0 0 20 20"><path fill="none" stroke="#999" stroke-width="3" d="M8 7l9 10M8 2q2 5-1 6-4 1-5-3"/></svg></button>
    </div>
    <div class="cbody">
      <div class="ccol">
        <div class="objname"><input type="text" aria-label="Object name" value="Air_Screen"><button aria-label="Object color"></button></div>
        <span class="sel mods"><select aria-label="Modifier List"><option>Modifier List</option></select></span>
        <ul class="stack">
          <li class="hi"><span class="ic"><svg class="e"><use href="#eye"/></svg></span><em>OpenSubdiv</em></li>
          <li><span class="ic"><i class="rt"></i></span><span>Editable Poly</span></li>
        </ul>
        <div class="stools">
          <button aria-label="Pin Stack"><svg viewBox="0 0 18 18"><path class="g" d="M11 3l5 5-2 1-3 5-3-3-6 6 5-7-2-2 5-3z"/></svg></button>
          <i class="sep"></i>
          <button class="on" aria-label="Show end result"><svg viewBox="0 0 18 18"><path class="g" d="M5 1h9v3h-1v13H7V4H5z"/><path class="t" d="M8 5h3v11H8z"/></svg></button>
          <i class="sep"></i>
          <button aria-label="Make unique"><svg viewBox="0 0 18 18"><circle class="g" cx="4" cy="4" r="3"/><circle class="t" cx="10" cy="14" r="3.500"/><path class="ts th" d="M9 4h5v7M11 9l3 3 3-3"/></svg></button>
          <button aria-label="Remove modifier"><svg viewBox="0 0 18 18"><path class="gs" d="M2 4h14M7 4V2h4v2M4 6v10h10V6M9 7v7"/></svg></button>
          <i class="sep"></i>
          <button aria-label="Configure sets"><svg viewBox="0 0 18 18"><path class="gs" d="M2 3h13v13H2zM2 7h13M7 10h-2v3h2zM12 10h-2v3h2z"/><path class="ys" d="M8 10l8-8"/></svg></button>
        </div>
        <div class="split"><i></i></div>
        <div class="rolls">
          <section class="roll open">
            <h3><button><i class="dn"></i>General Controls<i class="dots"></i></button></h3>
            <fieldset>
              <legend>Main</legend>
              <div class="row r"><label for="it">Iterations:</label><span class="spin"><input id="it" type="text" value="1"><svg><use href="#ud"/></svg></span></div>
              <div class="row r off"><input type="checkbox" id="ri"><label class="first" for="ri">Render Iters:</label><span class="spin"><input type="text" aria-label="Render iterations" value="0" disabled><svg><use href="#ud"/></svg></span></div>
              <div class="row c"><input type="checkbox" id="iso" checked><label for="iso">Isoline Display</label></div>
            </fieldset>
            <fieldset class="om">
              <legend>Operating Mode</legend>
              <div class="row c"><input type="radio" name="om" id="mo" checked><label for="mo">Mesh Output</label></div>
              <div class="row c"><input type="radio" name="om" id="gd"><label for="gd">GPU Display</label></div>
            </fieldset>
          </section>
          <section class="roll"><h3><button><i class="rt"></i>OpenSubdiv Controls<i class="dots"></i></button></h3></section>
          <section class="roll"><h3><button><i class="rt"></i>Mesh Controls<i class="dots"></i></button></h3></section>
        </div>
      </div>
    </div>
  </aside>
</main>

<div class="slider">
  <button aria-label="Previous frame">&lt;</button><button class="thumb">0 / 100</button><button aria-label="Next frame">&gt;</button>
</div>
<div class="timeline">
  <button class="curve" aria-label="Mini curve editor"><svg viewBox="0 0 18 18"><path stroke="#999" stroke-width="2" d="M3 2v14"/><path class="ts th" d="M7 12q2-14 5-3t5-3"/></svg></button>
  <div class="track">
    <i class="now"></i>
    <div class="ticks"></div>
    <div class="frames">
      <span>0</span><span>5</span><span>10</span><span>15</span><span>20</span><span>25</span><span>30</span><span>35</span><span>40</span><span>45</span><span>50</span><span>55</span><span>60</span><span>65</span><span>70</span><span>75</span><span>80</span><span>85</span><span>90</span><span>95</span><span>100</span>
    </div>
  </div>
</div>

<footer class="status">
  <div class="script"><input type="text" class="pink" aria-label="Macro recorder"><input type="text" class="white" aria-label="MAXScript listener"></div>
  <div class="msgs"><p>1 Object Selected</p><p>Click or click-and-drag to select objects</p></div>
  <div class="coords">
    <div class="crow">
      <button aria-label="Isolate"><svg viewBox="0 0 18 18"><path class="t" d="M5 5h8v8H5z"/><path class="gs" d="M2 5V2h3M13 2h3v3M16 13v3h-3M5 16H2v-3"/></svg></button>
      <button aria-label="Selection lock"><svg viewBox="0 0 18 18"><path class="gs" d="M6 8V4q3-4 6 0v4"/><path class="g" d="M4 8h10v8H4z"/><path class="k" d="M8 10h2v4H8z"/></svg></button>
      <button aria-label="Absolute mode"><svg viewBox="0 0 18 18"><path class="gs" d="M3 2h12v14H3z"/><circle class="gs" cx="9" cy="9" r="3"/><path class="gs" d="M9 2v4M9 12v4M3 9h3M12 9h3"/></svg></button>
      <label for="cx">X:</label><input id="cx" type="text" value="-109.988cm">
      <label for="cy">Y:</label><input id="cy" type="text" value="-279.437cm">
      <label for="cz">Z:</label><input id="cz" type="text" value="0.0cm">
      <span class="gridtxt">Grid = 10.0cm</span>
    </div>
    <div class="tag"><button aria-label="Time tag"><svg viewBox="0 0 18 18"><path class="gs th" d="M9 2l6 3v8l-6 3-6-3V5zM3 5l6 3 6-3M9 8v8"/></svg></button><a href="#">Add Time Tag</a></div>
  </div>
  <div class="playback">
    <div class="prow">
      <button aria-label="Go to start"><svg viewBox="0 0 18 18"><path class="g" d="M1 3h2v12H1zM10 4v10L4 9zM17 4v10l-6-5z"/></svg></button><button aria-label="Previous"><svg viewBox="0 0 18 18"><path class="g" d="M9 3v12L2 9zM11 4h2v10h-2zM15 4h2v10h-2z"/></svg></button><button class="fly" aria-label="Play"><svg viewBox="0 0 18 18"><path class="g" d="M3 1l13 8-13 8z"/></svg></button><button aria-label="Next"><svg viewBox="0 0 18 18"><path class="g" d="M9 3v12l7-6zM1 4h2v10H1zM5 4h2v10H5z"/></svg></button><button aria-label="Go to end"><svg viewBox="0 0 18 18"><path class="g" d="M15 3h2v12h-2zM8 4v10l6-5zM1 4v10l6-5z"/></svg></button>
    </div>
    <div class="prow"><button aria-label="Key mode"><svg viewBox="0 0 18 18"><path class="g" d="M7 4v10L2 9zM10 4v10l5-5z"/></svg></button><span class="spin fr"><input type="text" aria-label="Current frame" value="0"><svg><use href="#ud"/></svg></span><button aria-label="Time configuration"><svg viewBox="0 0 18 18"><circle class="g" cx="7" cy="7" r="6"/><path class="ks" d="M7 3v4h4"/><use href="#gear" x="7" y="8" width="10" height="10"/></svg></button></div>
  </div>
  <button class="bigkey" aria-label="Set keys"><svg viewBox="0 0 36 36"><path class="g" d="M14 3h5v11h11v5H19v11h-5V19H3v-5h11z"/><circle class="ts" cx="23" cy="28" r="4"/><path class="ts" d="M25 25l8-8M30 20l3 3"/></svg></button>
  <div class="keys">
    <button>Auto Key</button><span class="sel"><select aria-label="Key set"><option>Selected</option></select></span>
    <button>Set Key</button><span class="kf"><button class="ico fly" aria-label="Tangents"><svg viewBox="0 0 18 18"><path class="ts" d="M1 16Q7 16 7 5M17 16Q11 16 11 5"/><path class="gs" d="M7 3h4v3H7zM1 4h5M12 4h5"/></svg></button><button class="grow">Key Filters...</button></span>
  </div>
  <div class="nav">
    <button aria-label="Zoom"><svg viewBox="0 0 18 18"><circle class="gs" cx="10" cy="6" r="5"/><path class="gs w3" d="M7 10l-5 6"/></svg></button>
    <button aria-label="Zoom all"><svg viewBox="0 0 18 18"><path class="t" d="M7 1h5v5H7zM13 1h4v5h-4zM10 7h7v5h-7z"/><circle class="gs" cx="7" cy="8" r="3.500"/><path class="gs" d="M5 11l-4 5"/></svg></button>
    <button class="fly" aria-label="Zoom extents"><svg viewBox="0 0 18 18"><circle class="t" cx="9" cy="9" r="5"/><path class="gs" d="M1 5V1h4M13 1h4v4M17 13v4h-4M5 17H1v-4"/></svg></button>
    <button class="fly" aria-label="Zoom extents all"><svg viewBox="0 0 18 18"><path class="t" d="M10 3l6-2v13l-6 2z"/><path class="g" d="M1 9l4-3v3h4v3H5v3z"/></svg></button>
    <button class="fly" aria-label="Field of view"><svg viewBox="0 0 18 18"><path class="gs" d="M4 2l9 7-9 7M9 6v6"/></svg></button>
    <button class="fly" aria-label="Pan"><svg viewBox="0 0 18 18"><path class="g" d="M4 5h2l1 4V2h2v6l1-6h2v6l1-4h2l-1 9-2 4H7L2 9l2 1z"/></svg></button>
    <button class="fly" aria-label="Orbit"><svg viewBox="0 0 18 18"><circle class="t" cx="9" cy="9" r="5"/><path class="gs" d="M2 16q-2-3 6-8t9-6q1 3-6 8T2 16z"/></svg></button>
    <button aria-label="Maximize viewport"><svg viewBox="0 0 18 18"><path class="g" d="M1 1h16v16H1z"/><path class="k" d="M3 9h6v6H3zM8 3h7v7l-2-2-3 3-2-2 3-3z"/></svg></button>
  </div>
  <div class="minis">
    <div><svg class="i16"><use href="#max"/></svg><button aria-label="Restore"><svg class="i14"><use href="#rest"/></svg></button><button aria-label="Maximize"><svg class="i14"><use href="#box"/></svg></button><button aria-label="Close"><svg class="i14"><use href="#cls"/></svg></button></div>
    <div><svg class="i16"><use href="#max"/></svg><button aria-label="Restore"><svg class="i14"><use href="#rest"/></svg></button><button aria-label="Maximize"><svg class="i14"><use href="#box"/></svg></button><button aria-label="Close"><svg class="i14"><use href="#cls"/></svg></button></div>
  </div>
</footer>
<script src="scene.js"></script>
</body>
</html>
```
FILE: styles.css
```css
* { box-sizing: border-box; }
:root { --bg: #444; --field: #646464; --blue: #5b87c0; --teal: #4ec3bd; --amber: #f2a81d; --light: #d0d0d0; }
body { margin: 0; min-height: 100vh; display: flex; flex-direction: column; background: var(--bg); color: #dcdcdc; font: 11px/16px "DejaVu Sans Condensed", "Noto Sans", sans-serif; overflow: hidden; }
button, input, select { font: inherit; color: inherit; margin: 0; padding: 0; border: 0; background: none; border-radius: 0; }
button { display: flex; align-items: center; justify-content: center; flex: none; position: relative; }
a { color: inherit; text-decoration: none; }
h1, h2, h3, p, ul { margin: 0; padding: 0; font: inherit; list-style: none; }
svg { display: block; flex: none; }
.sprite { position: absolute; width: 0; height: 0; }
.i16 { width: 16px; height: 16px; }
.i14 { width: 14px; height: 14px; }
.g { fill: var(--light); } .t { fill: var(--teal); } .y { fill: var(--amber); } .k { fill: #3a3a3a; }
.gs, .ts, .ys, .ks { fill: none; stroke-width: 2px; }
.gs { stroke: var(--light); } .ts { stroke: var(--teal); } .ys { stroke: var(--amber); } .ks { stroke: #3a3a3a; }
.w3 { stroke-width: 3px; } .th { stroke-width: 1px; }
.grow { flex: 1; }
.on { background: var(--blue); border-radius: 3px; }
.fly::after { content: ""; position: absolute; right: 0; bottom: 0; border: 3px solid transparent; border-right-color: #eee; border-bottom-color: #eee; }
.tri { border: 4px solid transparent; border-top: 6px solid #eee; border-bottom: 0; }
.tri.dark { border-top-color: #111; }

.titlebar { display: flex; align-items: center; height: 23px; background: #f3f3f3; color: #1a1a1a; gap: 6px; font: 11px/16px "Noto Sans", sans-serif; }
.titlebar .winbtns { margin-left: auto; display: flex; }
.winbtns button { width: 46px; height: 23px; padding-bottom: 2px; }
.winbtns .hot { background: #eaeaea; }

.menubar { display: flex; align-items: center; height: 23px; background: linear-gradient(#555, #444); border-top: 1px solid #888; border-bottom: 1px solid #222; font-size: 12px; }
.menus { display: flex; gap: 26px; padding-left: 11px; flex: 1; }
.signin { width: 120px; height: 22px; background: #d0d0d0; color: #111; justify-content: flex-start; gap: 5px; padding: 0 6px 0 2px; font: 12px/16px "Liberation Sans", sans-serif; }
.signin .tri { margin-left: auto; }
.menubar label { padding: 0 4px 0 9px; font-size: 11px; color: #c8c8c8; }

.sel { position: relative; display: flex; background: var(--field); border-top: 1px solid #555; height: 20px; flex: none; color: #d0d0d0; }
.sel select { appearance: none; width: 100%; height: 100%; padding: 0 18px 0 5px; }
.sel::after { content: ""; position: absolute; right: 8px; top: 7px; border: 3px solid transparent; border-top: 6px solid #ddd; border-bottom: 0; pointer-events: none; }
.ws { width: 137px; height: 21px; font-size: 11px; }

.toolbar { display: flex; align-items: center; height: 33px; }
.toolbar.second { height: 34px; }
.toolbar > button { width: 30px; height: 30px; margin: 0 1px; }
.toolbar > button > svg { width: 24px; height: 24px; }
.toolbar .nr { margin: 0; }
.sep { width: 2px; height: 20px; background: #2a2a2a; margin: 0 2px; flex: none; }
.sep.w { margin: 0 3px; }
.grip { width: 4px; height: 26px; flex: none; margin: 0 3px 0 1px; background: repeating-linear-gradient(#888 0 1px, #444 1px 2px); }
.grip.wide { margin: 0 4px 0 3px; }
.fl { width: 70px; } .named { width: 120px; } .proj { width: 274px; height: 29px; margin-right: 3px; }
.fl, .named { align-self: flex-start; margin-top: 4px; }
.proj select { padding-left: 186px; color: #c4c4c4; background: linear-gradient(#555, #555) 2px 6px / 184px 18px no-repeat; }
.proj::after { top: 12px; }
.toolbar .axis { font: bold 24px/30px "Liberation Sans", sans-serif; color: #d0d0d0; }
.toolbar .axis.s { font-size: 17px; }
.toolbar .axis .hk { position: absolute; right: 2px; top: 3px; width: 13px; height: 14px; }
.grip.gap { margin-left: 8px; margin-right: 6px; }

.ribbon { display: flex; height: 40px; }
.ribbon .grip { height: 36px; margin: 2px 3px 0 0; }
.ribmain { flex: 1; font-size: 12px; }
.tabs { display: flex; align-items: flex-end; height: 21px; background: #525252; border-top: 1px solid #666; border-bottom: 1px solid #333; padding-left: 5px; color: #b4b4b4; }
.tabs button { padding: 0 22px; height: 18px; }
.tabs .cur { background: linear-gradient(#777, #555); border: 1px solid #333; border-bottom: 0; border-radius: 3px 3px 0 0; color: #e0e0e0; padding: 0 10px 0 20px; margin-right: 1px; }
.tabs .mini { padding: 0 9px; } .mini svg { width: 24px; height: 10px; }
.panels { height: 19px; background: linear-gradient(#404040, #373737); border-bottom: 1px solid #2c2c2c; padding-left: 1px; }
.panels button { height: 18px; padding: 0 5px; background: #4b4b4b; border: 1px solid #5c5150; color: #e0e0e0; }

.main { display: flex; flex: 1; min-height: 0; }
.hgrip { display: block; height: 4px; margin: 6px 4px 4px; background: repeating-linear-gradient(90deg, #808080 0 1px, #484848 1px 2px); flex: none; }
.strip { width: 39px; display: flex; flex-direction: column; }
.strip .hgrip { margin-left: 0; background: #666; height: 2px; margin-top: 8px; }
.well { flex: 1; width: 38px; background: #323232; border-right: 2px solid #262626; display: flex; flex-direction: column; justify-content: flex-end; padding-bottom: 4px; }
.play { width: 19px; height: 18px; background: #505050; border-radius: 3px; margin: 0 0 11px 9px; }
.play svg { width: 6px; height: 9px; }
.layout { margin-left: 2px; width: 36px; height: 45px; background: linear-gradient(#4a6287, #3c7fd6); border-radius: 4px 0 0 4px; padding: 7px 2px 8px 3px; align-items: stretch; }
.layout span { flex: 1; background: #5d6874; border: 1px solid #2c4770; }

.explorer { width: 307px; display: flex; flex-direction: column; padding-bottom: 5px; border-left: 1px solid #505050; }
.explorer .hgrip { margin-left: 4px; margin-right: 4px; }
.exmenu { display: flex; gap: 17px; padding: 4px 0 4px 17px; font-size: 12px; color: #e6e6e6; }
.find { display: flex; align-items: center; height: 26px; padding: 0 0 0 7px; }
.find input { width: 151px; height: 23px; border: 1px solid #666; }
.find button { width: 24px; height: 24px; }
.find button svg { width: 20px; height: 20px; }
.find .x { width: 21px; margin-right: 3px; } .find .x svg { width: 11px; height: 11px; }
.find .on { border-radius: 0; }
.vbar { width: 1px; height: 22px; background: #999; margin: 0 2px; }
.find .vbar { margin: 0 2px 0 3px; }
.exbody { display: flex; flex: 1; padding: 1px 0 1px 2px; }
.filters { width: 22px; display: flex; flex-direction: column; gap: 3px; padding-top: 3px; margin-right: 3px; }
.filters button { width: 22px; height: 20px; border-radius: 0; }
.filters svg { width: 16px; height: 16px; }
.filters hr { width: 18px; height: 1px; margin: 1px 2px; border: 0; background: #888; }
.treewrap { flex: 1; display: flex; flex-direction: column; border-left: 1px solid #333; margin-right: 2px; }
.tree { border-collapse: collapse; width: 100%; table-layout: fixed; }
.tree th, .tree td { padding: 0; height: 18px; font-weight: normal; text-align: left; }
.tree thead th { height: 21px; border: 1px solid #2e2e2e; border-bottom-color: #5a5a5a; padding-left: 1px; color: #e2e2e2; white-space: nowrap; }
.tree th .tri { float: right; margin: 5px 1px 0 0; }
.tree .fz { width: 57px; } .tree thead .fz { padding-left: 2px; }
.tree tbody .fz { border-left: 1px solid #3a3a3a; background: #4c4c4c; padding-left: 5px; }
.tree .fz .s { width: 13px; height: 13px; margin: 0 auto; opacity: .8; }
.n { display: flex; align-items: center; height: 18px; }
.l0 { padding-left: 1px; } .l1 { padding-left: 19px; } .l2 { padding-left: 37px; }
.tw { width: 16px; display: flex; justify-content: center; flex: none; }
.open.tw::before { content: ""; border: 6px solid transparent; border-top: 6px solid #fff; border-bottom: 0; }
.shut.tw::before { content: ""; border: 5px solid transparent; border-left: 7px solid #fff; border-right: 0; }
.e { width: 14px; height: 12px; } .o { width: 14px; height: 14px; margin: 0 2px; }
.nm { flex: 1; height: 18px; line-height: 18px; padding-left: 3px; background: #4c4c4c; color: #eee; }
.nm.off { color: #979797; }
.tree tbody tr:nth-child(even) .nm, .tree tbody tr:nth-child(even) .fz { background: #555; }
.tree tbody .sel-row .nm, .tree tbody .sel-row .fz { background: #7d7d7d !important; }
.hscroll { margin-top: auto; height: 17px; background: #efefef; padding: 8px 24px 0 17px; }
.hscroll i { display: block; height: 2px; background: #8a8a8a; }
.exfoot { display: flex; align-items: center; height: 24px; padding-left: 6px; }
.exfoot input { width: 145px; height: 23px; border: 1px solid #666; color: #ecec1c; padding-left: 1px; }
.exfoot .tri { border-width: 3px; border-top-width: 4px; margin: 0 6px 0 5px; }
.exfoot button { width: 24px; height: 23px; border-radius: 0; } .exfoot svg { width: 18px; height: 18px; }
.exfoot .on { margin-right: 2px; } .exfoot .vbar { margin-right: 1px; }
.more { margin: -8px 4px 0 auto; color: #5a50b0; }

.viewport { flex: 1; min-width: 0; position: relative; border: 2px solid #77622a; background: linear-gradient(#303030, #353535 30%, #353535); margin: 5px 0 3px 3px; }
.scene { position: absolute; inset: 0; width: 100%; height: 100%; }
.ax { font: 9px "Liberation Sans", sans-serif; } .ax.b { font-weight: bold; }
.vplabel { position: relative; display: flex; gap: 3px; padding: 4px 0 0 3px; color: #c2c2c2; font-family: "Noto Sans", sans-serif; line-height: 16px; }

.win { position: absolute; left: 3px; top: 26px; width: 570px; background: #444; border-radius: 8px; overflow: hidden; box-shadow: 0 6px 26px #0009; font: 11px/18px "Noto Sans", sans-serif; padding-bottom: 4px; }
.wtitle { display: flex; align-items: center; height: 30px; padding: 0 1px 0 8px; background: #f3f3f3; color: #222; }
.wtitle h2 { flex: 1; margin-left: 7px; }
.wtitle button { width: 45px; height: 30px; }
.wmenu { display: flex; gap: 14px; height: 20px; background: #fff; color: #222; padding-left: 8px; }
.wtools { display: flex; align-items: center; gap: 4px; height: 30px; padding: 3px 3px 0 4px; }
.wtools button { width: 23px; height: 23px; } .wtools svg { width: 15px; height: 15px; }
.frame { margin: 0 4px; border: 2px solid #5c5c5c; background: #efefef; }
.gridrow { display: flex; }
.tblwrap { flex: 1; min-width: 0; overflow: hidden; }
.assets { border-collapse: collapse; table-layout: fixed; width: 100%; background: #444; color: #eee; }
.c1 { width: 235px; } .c2 { width: 175px; } .c3 { width: 87px; }
.assets th { background: #fff; color: #333; font-weight: normal; text-align: left; height: 25px; padding: 0 0 1px 5px; border-right: 1px solid #e0e0e0; white-space: nowrap; }
.assets td { height: 19px; padding: 0 0 0 5px; line-height: 16px; border: 1px solid #ededed; border-width: 0 1px 1px 0; white-space: nowrap; overflow: hidden; }
.assets tbody td:last-child, .assets th:last-child { border-right: 0; }
.assets td:first-child { padding-left: 74px; }
.assets td.grp:first-child { padding-left: 58px; }
.assets td svg { display: inline-block; width: 11px; height: 15px; vertical-align: middle; margin-right: 5px; }
.assets td.grp svg { width: 13px; height: 12px; margin-right: 3px; }
.assets .part td { height: 11px; border-bottom: 0; }
.vscroll { width: 17px; padding: 52px 0 17px 8px; display: flex; } .vscroll i { width: 2px; background: #8a8a8a; }
.whs { height: 17px; padding: 8px 133px 0 18px; } .whs i { display: block; height: 2px; background: #8a8a8a; }
.wstatus { display: block; width: 562px; height: 24px; margin: 3px 4px 0; border: 2px solid #f4f4f4; }

.cmd { width: 381px; display: flex; flex-direction: column; padding-left: 4px; }
.cmd .hgrip { margin: 6px 0 4px 3px; }
.ctabs { display: flex; background: #3b3b3b; height: 27px; margin-left: 1px; }
.ctabs button { width: 32px; border-right: 1px solid #363636; } .ctabs .cur { background: #444; } .ctabs svg { width: 19px; height: 19px; }
.cbody { flex: 1; display: flex; border-right: 4px solid #3c3c3c; margin-bottom: 3px; }
.ccol { display: flex; flex-direction: column; width: 190px; padding: 6px 0 0 4px; }
.objname { display: flex; gap: 6px; align-items: center; }
.objname input { width: 161px; height: 19px; background: var(--field); padding-left: 4px; }
.objname button { width: 16px; height: 20px; background: #000; }
.mods { width: 185px; margin-top: 10px; } .mods select { padding-left: 2px; }
.stack { width: 186px; height: 127px; border: 1px solid #f0f0f0; margin-top: 5px; }
.stack li { display: flex; height: 17px; line-height: 18px; border-bottom: 1px solid #888; color: #eee; }
.stack li + li { height: 18px; }
.ic { width: 21px; display: flex; align-items: center; padding-left: 5px; }
.hi em { flex: 1; background: var(--blue); padding-left: 22px; }
.rt { border: 4px solid transparent; border-left: 6px solid #ddd; border-right: 0; } .dn { border: 4px solid transparent; border-top: 6px solid #aaa; border-bottom: 0; }
.stools { display: flex; align-items: center; height: 34px; gap: 2px; }
.stools button { width: 22px; height: 23px; } .stools svg { width: 17px; height: 17px; } .stools .sep { width: 1px; height: 16px; margin: 0 4px 0 5px; background: #111; }
.split { height: 2px; margin: 12px 8px 7px 4px; border-top: 1px solid #5c5c5c; display: flex; justify-content: center; }
.split i { width: 14px; height: 4px; margin-top: -2px; background: repeating-linear-gradient(90deg, #aaa 0 1px, #444 1px 2px); }
.rolls { flex: 1; display: flex; flex-direction: column; gap: 3px; padding-right: 5px; border-right: 4px solid #3c3c3c; }
.roll { background: #505050; border: 1px solid #4a4a4a; border-radius: 2px; }
.roll.open { padding-bottom: 9px; }
.roll h3 button { width: 100%; height: 17px; justify-content: flex-start; padding: 0 7px 0 5px; gap: 6px; font-weight: bold; color: #f2f2f2; }
.roll .rt { border-width: 3px; border-left-width: 4px; border-color: transparent transparent transparent #bbb; margin: 0 2px 0 1px; } .roll .dn { border-width: 3px; border-top-width: 5px; border-color: #aaa transparent transparent; border-bottom: 0; margin-right: 1px; }
.roll.open h3 { margin-bottom: 10px; }
.dots { margin-left: auto; width: 6px; height: 6px; background: repeating-linear-gradient(90deg, #909090 0 1px, transparent 1px 2px); }
fieldset { position: relative; margin: 0 11px 6px 9px; padding: 4px 5px 2px 5px; border: 1px solid #3c3c3c; }
legend { position: absolute; left: 2px; top: -8px; padding: 0 2px; background: #505050; color: #e2e2e2; }
.row { display: flex; align-items: center; height: 18px; gap: 4px; }
.row + .row { margin-top: 3px; }
.row.r { justify-content: flex-end; } .row .first { margin-right: auto; }
.row.c { padding-left: 32px; }
.spin { display: flex; align-items: center; width: 47px; height: 16px; background: var(--field); color: #c8c8c8; }
.spin input { flex: 1; min-width: 0; padding-left: 4px; } .spin svg { width: 7px; height: 10px; margin-right: 3px; }
.off .spin { background: #585858; color: #8a8a8a; } .off .spin svg { opacity: .5; }
input[type=checkbox], input[type=radio] { appearance: none; width: 13px; height: 13px; background: #5f5f5f; flex: none; display: flex; align-items: center; justify-content: center; }
input[type=radio] { border-radius: 50%; width: 14px; height: 14px; }
input[type=checkbox]:checked::before { content: "✔"; font: 11px/13px "DejaVu Sans", sans-serif; color: #eee; }
input[type=radio]:checked::before { content: ""; width: 8px; height: 8px; border-radius: 50%; background: #e6e6e6; }
fieldset.om { padding-top: 7px; padding-bottom: 4px; margin-bottom: 0; } .om .row { height: 16px; } .om .row + .row { margin-top: 0; }

.slider { display: flex; align-items: center; gap: 3px; height: 24px; border-left: 3px solid #555; padding: 0 0 2px 5px; }
.slider button { width: 14px; height: 17px; background: #5a5a5a; border-radius: 2px; color: #c8c8c8; } .slider .thumb { width: 122px; background: #646464; }
.timeline { display: flex; height: 26px; margin-left: 8px; border-top: 1px solid #1c1c1c; padding-right: 48px; }
.curve { width: 52px; padding-right: 12px; } .curve svg { width: 15px; height: 17px; }
.track { flex: 1; position: relative; background: #2a2a2a; padding: 0 5px 0 4px; }
.ticks { height: 12px; margin-right: -1px; background: repeating-linear-gradient(90deg, #7c7c7c 0 1px, transparent 1px 1%); }
.frames { display: flex; position: relative; margin: 0 -2.5%; }
.frames span { flex: 1 1 0; text-align: center; line-height: 13px; color: #bdbdbd; }
.now { position: absolute; left: 1px; top: 0; width: 7px; height: 25px; background: #8f8b22; }

.status { position: relative; display: flex; height: 56px; overflow: hidden; }
.script { width: 131px; margin-left: 3px; padding-top: 5px; display: flex; flex-direction: column; }
.script input { height: 24px; border: 2px solid #f0f0f0; border-width: 2px 2px 1px 0; } .pink { background: #dbc4c4; border-top-color: #9a8d8d !important; } .white { background: #fff; }
.msgs { border-left: 2px solid #222; margin: 5px 0 0 2px; padding: 5px 0 0 5px; flex: 1; color: #e4e4e4; } .msgs p + p { margin-top: 9px; }
.coords { width: 442px; padding-top: 7px; color: #e0e0e0; }
.crow { display: flex; align-items: center; height: 19px; }
.crow button { width: 27px; height: 20px; } .crow svg, .tag svg { width: 17px; height: 17px; }
.crow label { width: 14px; text-align: right; margin-right: 2px; font-weight: bold; } .crow input { width: 58px; height: 17px; background: #585858; color: #8f8f8f; padding-left: 2px; margin-right: 10px; }
.gridtxt { margin-left: 5px; white-space: nowrap; }
.tag { display: flex; align-items: center; margin: 6px 0 0 310px; border-left: 2px solid #2c2c2c; height: 18px; } .tag button { width: 22px; margin-right: 3px; }
.playback { width: 124px; padding-top: 6px; margin-left: 5px; } .prow { display: flex; align-items: center; height: 22px; } .prow button { width: 24px; height: 22px; } .prow svg { width: 16px; height: 16px; }
.prow .fr { width: 73px; height: 17px; border-left: 2px solid #333; } .prow .fr svg { width: 7px; height: 10px; }
.bigkey { width: 42px; height: 43px; margin: 7px 5px 0 6px; background: #5c5c5c; border: 1px solid #6a6a6a; border-radius: 3px; } .bigkey svg { width: 34px; height: 34px; }
.keys { display: grid; grid-template-columns: 47px 114px; gap: 2px 4px; padding-top: 7px; align-content: start; margin-right: 10px; }
.keys button { height: 20px; background: #606060; border: 1px solid #666; border-radius: 2px; color: #dcdcdc; white-space: nowrap; } .keys .ico { width: 22px; background: none; border: 0; margin-right: 4px; } .ico svg { width: 18px; height: 18px; }
.kf { display: flex; } .kf .grow { flex: 1; }
.nav { display: grid; grid-template-columns: repeat(4, 24px); grid-auto-rows: 22px; padding-top: 6px; margin-right: 4px; width: 97px; } .nav svg { width: 17px; height: 17px; }
.minis { position: absolute; left: 7px; bottom: 0; display: flex; gap: 16px; }
.minis div { display: flex; align-items: center; width: 144px; height: 27px; background: #f5f5f5; border-radius: 7px; padding-left: 7px; }
.minis button { width: 46px; height: 27px; opacity: .65; } .minis button:nth-child(2) { width: 14px; } .minis button:nth-child(3) { margin-left: 15px; }
.minis .i14 { width: 12px; height: 12px; }
```
FILE: scene.js
```javascript
(() => {
  const NS = 'http://www.w3.org/2000/svg';
  const add = (parent, tag, attrs) => {
    const el = document.createElementNS(NS, tag);
    for (const k in attrs) el.setAttribute(k, attrs[k]);
    parent.appendChild(el);
    return el;
  };

  // Home grid of the perspective view
  const floor = [
    [1260, 514, 1450, 499], [1450, 499, 1539, 511], [1265, 525, 1539, 511], [1300, 495, 1539, 531],
    [1262, 545, 1539, 529], [1265, 513, 1539, 558], [1262, 578, 1539, 555], [1262, 535, 1539, 594],
    [1262, 608, 1539, 586], [1258, 575, 1539, 645], [1255, 655, 1539, 630], [1258, 632, 1539, 705],
    [1255, 725, 1539, 695], [925, 567, 995, 562], [925, 592, 995, 590], [925, 596, 995, 616],
    [925, 630, 995, 626], [925, 681, 995, 677], [925, 758, 995, 753], [925, 525, 995, 520],
    [925, 527, 995, 547], [350, 822, 640, 785], [640, 740, 760, 924]
  ];
  add(document.getElementById('floor'), 'path', { d: floor.map(l => `M${l[0]} ${l[1]}L${l[2]} ${l[3]}`).join('') });

  // Phone body
  const phone = document.getElementById('phone');
  const BODY = 'M993 290C993 255 1012 239 1050 238L1227 243C1258 246 1271 262 1270 300L1256 790C1255 820 1244 838 1222 843L1048 868C1015 870 992 855 992 820Z';
  const FACE = 'M1007 300C1007 266 1025 250 1055 247L1225 251C1254 254 1265 270 1265 300L1251 790C1250 818 1240 831 1218 835L1050 861C1020 864 1005 845 1005 820Z';
  const INK = '#2e0b09';
  const defs = add(phone, 'defs', {});
  const clip = (id, d) => add(add(defs, 'clipPath', { id }), 'path', { d });
  clip('body', BODY);
  clip('face', FACE);
  add(phone, 'path', { d: BODY, fill: '#3f120f', stroke: '#250706', 'stroke-width': 2 });
  const sides = add(phone, 'g', { 'clip-path': 'url(#body)', fill: 'none', stroke: '#64241f', 'stroke-width': 1 });
  add(sides, 'path', { d: 'M997 290V830M1000 285V835M1003 280V840M1259 800L1268 300' });
  add(phone, 'path', { d: FACE, fill: '#7f3a36', stroke: INK, 'stroke-width': 2 });

  // Rounded plateau outline grown by k steps
  const mesh = add(phone, 'g', { 'clip-path': 'url(#face)', fill: 'none', stroke: INK, 'stroke-width': 1 });
  const ring = k => {
    const l = 1027 - k * 2.6, r = 1260 + k * 1.5, t = 260 - k * 1.8, b = 355 + k * 2.6, c = 44 + k, m = (t + b) / 2;
    return `M${l + c} ${t}L${r - c} ${t + 4}C${r - 12} ${t + 5} ${r} ${t + 24} ${r} ${m + 2}C${r} ${b - 20} ${r - 16} ${b} ${r - c} ${b}L${l + c} ${b}C${l + 14} ${b - 1} ${l} ${b - 22} ${l} ${m}C${l} ${t + 20} ${l + 14} ${t} ${l + c} ${t}Z`;
  };
  for (let k = 10; k >= 1; k -= k > 5 ? 2 : 1) add(mesh, 'path', { d: ring(k), fill: k < 5 ? '#51201c' : '#7a3632', 'fill-opacity': .5, 'stroke-opacity': .75 });
  let spokes = '';
  for (let x = 1030; x < 1250; x += 13) spokes += `M${x + 5} 258L${x} 242`;
  for (let y = 275; y < 345; y += 11) spokes += `M1027 ${y}L1008 ${y - 3}`;
  add(mesh, 'path', { d: spokes, 'stroke-opacity': .7 });

  // Edges running across the back
  const upper = [145, 157, 193, 228, 266, 304, 334, 368, 410, 452, 496, 538, 580, 624, 664, 704, 737, 757, 780, 812, 840, 870, 890];
  const lower = [138, 152, 186, 222, 258, 296, 325, 354, 395, 437, 478, 520, 562, 605, 645, 683, 712, 730, 752, 783, 812, 848, 862];
  let d = '';
  upper.forEach((u, i) => {
    const slope = (lower[i] - u) / 3 / 323;
    const x = y => (960 + u / 3 + slope * (y - 450)).toFixed(1);
    d += `M${x(350)} 350L${x(868)} 868`;
  });
  const left = [398, 426, 454, 482, 510, 537, 565, 593, 620, 647, 675, 702, 728, 755, 782, 806, 815, 825, 835, 845, 854];
  const right = [394, 420, 447, 473, 499, 525, 551, 577, 602, 628, 653, 678, 703, 728, 752, 775, 783, 792, 802, 812, 822];
  left.forEach((l, i) => { d += `M1005 ${l}L1264 ${right[i]}`; });
  add(mesh, 'path', { d });

  // Camera plateau
  clip('plate', ring(0));
  add(phone, 'path', { d: ring(0), fill: '#7f3a36', stroke: '#240706', 'stroke-width': 4 });
  const plate = add(phone, 'g', { 'clip-path': 'url(#plate)', fill: 'none', stroke: INK, 'stroke-width': 1 });
  let p = '';
  [1040, 1052, 1062, 1075, 1091, 1104, 1119, 1133, 1148, 1163, 1177, 1189, 1204, 1222, 1236, 1250].forEach(x => { p += `M${x} 258V358`; });
  [269, 282, 295, 308, 321, 334, 346].forEach(y => { p += `M1025 ${y}H1262`; });
  add(plate, 'path', { d: p });
  add(plate, 'path', { d: ring(-3), 'stroke-opacity': .8 });

  // Lenses
  const disc = (cx, cy, r, fill, w) => add(plate, 'ellipse', { cx, cy, rx: r * .94, ry: r, fill, 'stroke-width': w });
  disc(1071, 307, 33, '#5a211d', 3);
  disc(1071, 307, 29, '#6a2a26', 2);
  disc(1074, 307, 25, '#4a1714', 3);
  disc(1074, 307, 21, '#7a3531', 2);
  disc(1074, 307, 15, 'none', 1);
  add(plate, 'path', { d: 'M1054 307h40M1074 286v42M1059 292l5 5M1089 292l-5 5M1059 322l5-5M1089 322l-5-5M1066 287v40M1082 287v40M1055 299h38M1055 315h38' });
  disc(1198, 309, 11, '#7f3a36', 1);
  disc(1198, 309, 5, '#3a100d', 2);
  disc(1223, 308, 21, '#7f3a36', 1);
  disc(1223, 308, 12, '#4a1714', 2);
  disc(1223, 308, 8, '#2a0908', 2);
  add(plate, 'path', { d: 'M1212 298l-8-10M1233 298l8-9M1212 319l-8 10M1233 318l8 9M1223 287v9M1223 320v9M1203 308h8M1235 308h9' });

  // Selected object outline
  add(phone, 'path', {
    d: 'M995 545V334L996 285C1000 258 1014 245 1033 243.500L1080 244L1107 246L1193 247.500L1214 249C1240 252 1252 264 1256 288L1255 363L1250 510L1244 740L1243 787C1240 815 1228 833 1205 836L1040 859C1010 862 993 845 993 822V760Z',
    fill: 'none', stroke: '#5fe9e9', 'stroke-width': 2
  });
  add(phone, 'ellipse', { cx: 1156, cy: 280, rx: 7.5, ry: 9, fill: 'none', stroke: '#8ff5f0', 'stroke-width': 2 });
})();
```
